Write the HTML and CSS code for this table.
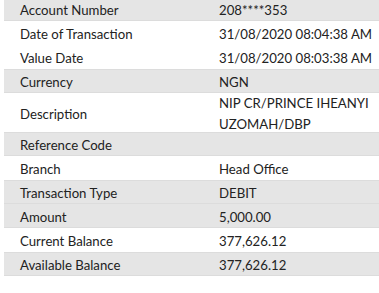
FILE: index.html
```html
<!DOCTYPE html>
<html>
<head>
<meta charset="utf-8">
<link rel="stylesheet" href="styles.css">
</head>
<body>
<div class="details">
  <div class="row alt first"><div class="label">Account Number</div><div class="value">208****353</div></div>
  <div class="row"><div class="label">Date of Transaction</div><div class="value">31/08/2020 08:04:38 AM</div></div>
  <div class="row"><div class="label">Value Date</div><div class="value">31/08/2020 08:03:38 AM</div></div>
  <div class="row alt"><div class="label">Currency</div><div class="value">NGN</div></div>
  <div class="row tall"><div class="label">Description</div><div class="value">NIP CR/PRINCE IHEANYI<br>UZOMAH/DBP</div></div>
  <div class="row alt"><div class="label">Reference Code</div><div class="value"></div></div>
  <div class="row"><div class="label">Branch</div><div class="value">Head Office</div></div>
  <div class="row alt"><div class="label">Transaction Type</div><div class="value">DEBIT</div></div>
  <div class="row alt"><div class="label">Amount</div><div class="value">5,000.00</div></div>
  <div class="row"><div class="label">Current Balance</div><div class="value">377,626.12</div></div>
  <div class="row alt"><div class="label">Available Balance</div><div class="value">377,626.12</div></div>
</div>
</body>
</html>
```
FILE: styles.css
```css
html, body {
  margin: 0;
  padding: 0;
  background: #ffffff;
}
body {
  font-family: Lato, "Open Sans", sans-serif;
  font-size: 13.2px;
  color: #222222;
}
.details {
  margin-left: 4px;
  display: flex;
  flex-direction: column;
}
.row {
  box-sizing: border-box;
  height: 24px;
  display: grid;
  grid-template-columns: 199px 1fr;
  align-items: center;
  padding-left: 16px;
  padding-top: 1px;
}
.row.first {
  height: 21px;
  padding-top: 0;
}
.row.tall {
  height: 39px;
  padding-top: 0;
  line-height: 21px;
}
.row.alt {
  background: #e5e5e5;
  border-top: 1px solid #dcdcdc;
  border-bottom: 1px solid #dcdcdc;
}
.row.alt.first {
  border-top: none;
}
.row.alt + .row.alt {
  border-top-color: #e5e5e5;
}
.label, .value {
  white-space: nowrap;
}
```
